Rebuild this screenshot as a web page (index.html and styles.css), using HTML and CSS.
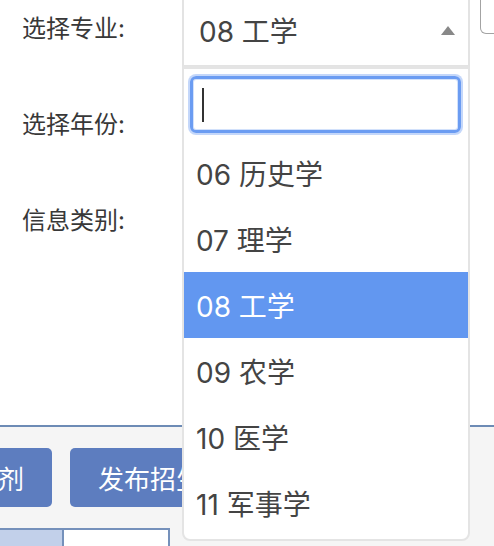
FILE: index.html
```html
<!DOCTYPE html>
<html lang="zh-CN">
<head>
<meta charset="utf-8">
<title>选择专业</title>
<link rel="stylesheet" href="styles.css">
</head>
<body>
<div class="page">
  <div class="form">
    <div class="row">
      <div class="label">选择专业:</div>
      <div class="select open">
        <span class="select-text">08 工学</span>
        <span class="arrow"></span>
      </div>
      <div class="side-btn"></div>
    </div>
    <div class="row">
      <div class="label">选择年份:</div>
      <div class="select"><span class="select-text"></span><span class="arrow down"></span></div>
    </div>
    <div class="row">
      <div class="label">信息类别:</div>
      <div class="select"><span class="select-text"></span><span class="arrow down"></span></div>
    </div>
  </div>

  <div class="bottom">
    <div class="actions">
      <div class="btn">发布调剂</div>
      <div class="btn">发布招生</div>
    </div>
    <div class="tabs">
      <div class="tab active"></div>
      <div class="tab"></div>
    </div>
  </div>

  <div class="dropdown">
    <div class="search">
      <div class="search-input"><span class="caret"></span></div>
    </div>
    <ul class="results">
      <li class="option">06 历史学</li>
      <li class="option">07 理学</li>
      <li class="option selected">08 工学</li>
      <li class="option">09 农学</li>
      <li class="option">10 医学</li>
      <li class="option">11 军事学</li>
    </ul>
  </div>
</div>
</body>
</html>
```

FILE: styles.css
```css
* { box-sizing: border-box; }
html, body { margin: 0; padding: 0; }
body {
  background: #ffffff;
  font-family: "Inter", "Noto Sans CJK SC", sans-serif;
  color: #333;
}
.page {
  position: relative;
  width: 494px;
  height: 546px;
  overflow: hidden;
}
.form {
  margin-top: -19px;
  height: 444px;
  padding-left: 22px;
  background: #fff;
}
.row {
  display: flex;
  align-items: center;
  height: 96px;
}
.label {
  width: 160px;
  flex: none;
  font-size: 24px;
  color: #383838;
  line-height: 30px;
}
.select {
  flex: none;
  width: 288px;
  height: 76px;
  border: 2px solid #e3e3e3;
  border-radius: 6px;
  display: flex;
  align-items: center;
  justify-content: space-between;
  padding: 2px 13px 0 15px;
  font-size: 28px;
  color: #444;
}
.select.open {
  border-radius: 6px 6px 0 0;
}
.arrow {
  width: 0;
  height: 0;
  border-left: 7.5px solid transparent;
  border-right: 7.5px solid transparent;
  border-bottom: 9px solid #888;
}
.arrow.down {
  border-bottom: 0;
  border-top: 9px solid #888;
}
.side-btn {
  flex: none;
  align-self: flex-start;
  margin-left: 10px;
  width: 80px;
  height: 53px;
  border: 1.5px solid #a3a3a3;
  border-radius: 0 0 6px 6px;
  border-top: 0;
}
.bottom {
  border-top: 2px solid #6d8bb5;
  background: #f5f5f5;
  height: 121px;
  padding-top: 21px;
}
.actions {
  display: flex;
  gap: 18px;
  margin-left: -108px;
}
.btn {
  height: 59px;
  padding: 0 28px;
  background: #5d7dbf;
  color: #fff;
  border-radius: 5px;
  font-size: 26px;
  display: flex;
  align-items: center;
  white-space: nowrap;
}
.tabs {
  display: flex;
  margin-top: 21px;
}
.tab {
  height: 30px;
  border-top: 2px solid #7591bb;
  border-right: 2px solid #7591bb;
  background: #fff;
  width: 106px;
}
.tab.active {
  width: 64px;
  background: #c2d0ea;
}
.dropdown {
  position: absolute;
  left: 182px;
  top: 66px;
  width: 288px;
  height: 475px;
  background: #fff;
  border: 2px solid #e4e4e4;
  border-top-width: 3px;
  border-radius: 0 0 8px 8px;
}
.search {
  padding: 7px 7px 7px 6px;
}
.search-input {
  height: 57px;
  border: 3px solid #6b9cf2;
  border-radius: 6px;
  box-shadow: 0 0 0 2px rgba(107, 156, 242, 0.4), inset 0 0 0 1px rgba(107, 156, 242, 0.3);
  display: flex;
  align-items: center;
  padding-left: 9px;
}
.caret {
  width: 2px;
  height: 34px;
  background: #333;
}
.results {
  list-style: none;
  margin: 0;
  padding: 0;
  height: 399px;
  overflow: hidden;
}
.option {
  height: 66px;
  display: flex;
  align-items: center;
  padding-left: 12px;
  font-size: 28px;
  color: #444;
}
.option.selected {
  background: #6297f0;
  color: #fff;
}
```
